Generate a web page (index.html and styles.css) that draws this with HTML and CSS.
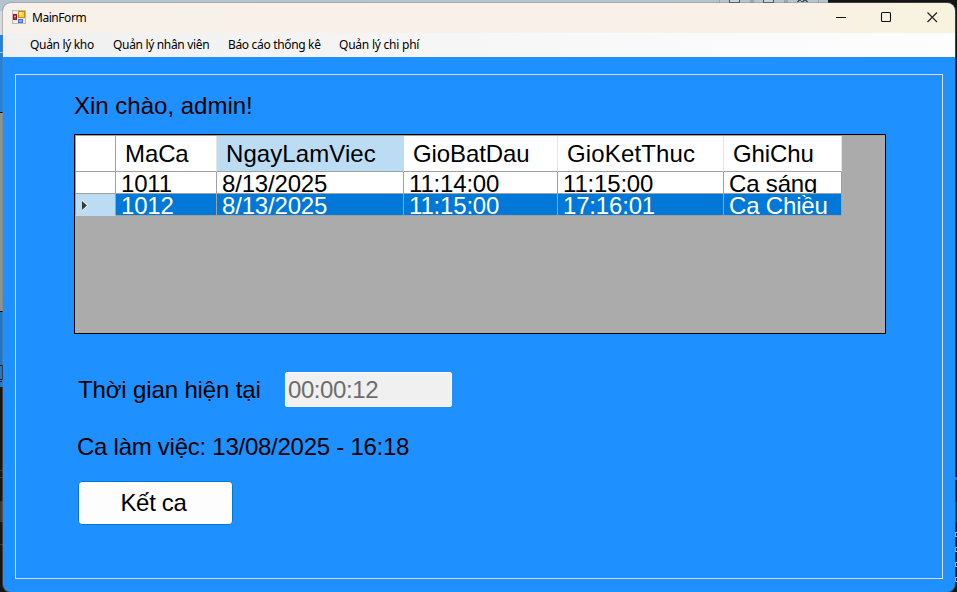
FILE: index.html
```html
<!DOCTYPE html>
<html lang="vi">
<head>
<meta charset="utf-8">
<title>MainForm</title>
<link rel="stylesheet" href="styles.css">
</head>
<body>
<svg class="backdrop" width="957" height="592" shape-rendering="crispEdges">
  <rect width="957" height="592" fill="#171513"/>
  <rect width="828" height="12" fill="#b7c3cd"/>
  <g fill="#9aa6b6"><rect x="719" width="1" height="3"/><rect x="750" width="4" height="3"/><rect x="784" width="4" height="3"/><rect x="818" width="1" height="3"/></g>
  <g fill="#cfd0d2" stroke="#484c56"><path d="M729.500-1v3h10v-3M763.500-1v3h10v-3"/></g>
  <path d="M797 2l3-2 2 2 3-2 3 2" fill="none" stroke="#484c56"/>
  <rect y="11" width="4" height="24" fill="#d8d9da"/>
  <rect y="35" width="4" height="78" fill="#1f82e0"/>
  <rect y="52" width="4" height="1" fill="#b9c6d0"/>
  <rect y="112" width="4" height="1" fill="#000"/>
  <rect y="113" width="4" height="198" fill="#929292"/>
  <rect y="311" width="4" height="1" fill="#000"/>
  <rect y="312" width="4" height="75" fill="#1e76c8"/>
  <path d="M0 365h2v14h-2M0 381h2" fill="none" stroke="#07101c"/>
  <g fill="#3b3836"><rect y="470" width="3" height="1"/><rect y="477" width="3" height="1"/><rect y="501" width="3" height="21"/><rect y="544" width="3" height="1"/></g>
  <rect x="955" y="477" width="2" height="3" fill="#5c50b0"/>
  <rect x="955" y="502" width="2" height="20" fill="#353231"/>
  <g fill="none" stroke="#c3b397"><path d="M957 532.500h-1.500v4h1.500M957 547.500h-1.500v4h1.500M957 562.500h-1.500v4h1.500M957 577.500h-1.500v4h1.500"/></g>
</svg>
<div class="window">
  <header class="titlebar">
    <svg class="app-icon" width="14" height="14" viewBox="0 0 14 14">
      <rect x=".5" y=".5" width="13" height="13" fill="#eceef0" stroke="#b9bbbd"/>
      <rect x="6.500" y="1.500" width="6" height="6" fill="#ffd03d" stroke="#c58b08"/>
      <rect x="7" y="2" width="3" height="3" fill="#ffe88c"/>
      <rect x="1.500" y="4.500" width="3" height="5" fill="#c83a36" stroke="#8f1716"/>
      <rect x="2.500" y="6" width="1" height="1" fill="#fff"/>
      <rect x="6.500" y="9.500" width="4" height="3" fill="#7fb0f8" stroke="#3b70cf"/>
    </svg>
    <span class="title">MainForm</span>
    <svg class="controls" width="104" height="12" viewBox="0 0 104 12">
      <path d="M1 6.500h10" stroke="#111"/>
      <rect x="46.500" y="1.500" width="9" height="9" rx="1" fill="none" stroke="#111" stroke-width="1.100"/>
      <path d="M92.500 1.500l9.500 9.500M102 1.500l-9.500 9.500" stroke="#222" stroke-width="1.150"/>
    </svg>
  </header>
  <nav class="menu">
    <span class="m1">Quản lý kho</span><span class="m2">Quản lý nhân viên</span><span class="m3">Báo cáo thống kê</span><span class="m4">Quản lý chi phí</span>
  </nav>
  <main class="panel">
    <div class="greeting"><span>Xin chào, admin!</span></div>
    <div class="gridview">
      <div class="row head"><div></div><div>MaCa</div><div class="active">NgayLamViec</div><div>GioBatDau</div><div class="wide">GioKetThuc</div><div>GhiChu</div></div>
      <div class="row"><div></div><div>1011</div><div>8/13/2025</div><div>11:14:00</div><div>11:15:00</div><div>Ca sáng</div></div>
      <div class="row selected"><div><svg width="7" height="11" viewBox="0 0 7 11"><path d="M0 0l6 5.500-6 5.500z" fill="#fff"/><path d="M0 1l5 4.500-5 4.500z" fill="#383838"/></svg></div><div>1012</div><div>8/13/2025</div><div>11:15:00</div><div>17:16:01</div><div>Ca Chiều</div></div>
    </div>
    <div class="time"><span class="time-label">Thời gian hiện tại</span><div class="time-box">00:00:12</div></div>
    <div class="shift"><span>Ca làm việc: 13/08/2025 - 16:18</span></div>
    <button class="end"><span>Kết ca</span></button>
  </main>
</div>
</body>
</html>
```
FILE: styles.css
```css
* { box-sizing: border-box; }
body {
  margin: 0;
  width: 957px;
  height: 592px;
  padding: 3px 2px 0 3px;
  overflow: hidden;
  font: 24px/28px "Liberation Sans", Arial, sans-serif;
  color: #000;
}
.backdrop { position: absolute; left: 0; top: 0; z-index: -1; }
.window {
  height: 589px;
  background: #1e90ff;
  border-radius: 8px;
  overflow: hidden;
  box-shadow: 0 0 0 1px #77818b66;
  white-space: nowrap;
}
.titlebar {
  height: 30px;
  display: flex;
  align-items: center;
  padding: 0 17px 2px 9px;
  background: linear-gradient(90deg, #f8f1ea, #f9f0e9 65%, #f9f1e7 82%, #f8f3de);
  font: 12px/16px "Noto Sans", "Open Sans", sans-serif;
}
.title { margin-left: 6px; padding-top: 2px; letter-spacing: -.45px; }
.controls { margin-left: auto; margin-right: -1px; }
.menu {
  height: 24px;
  display: flex;
  align-items: center;
  padding-left: 27px;
  background: linear-gradient(90deg, #f0f0f0, #f4f4f4 35%, #fbfbfb 80%, #fdfdfd);
  font: 12px/16px "Noto Sans", "Open Sans", sans-serif;
  letter-spacing: -.33px;
}
.m1 { width: 83px; }
.m2 { width: 115px; }
.m3 { width: 111px; }
.m4 { letter-spacing: -.23px; }
.panel {
  margin: 17px 12px 0;
  height: 505px;
  border: 1px solid #dcdcdc;
  padding-left: 58px;
}
.greeting { height: 59px; padding-top: 17px; }
.gridview {
  width: 812px;
  height: 200px;
  border: 1px solid #000;
  background: linear-gradient(#a0a0a0 1px, #ababab 1px);
  padding-top: 1px;
}
.row {
  display: grid;
  grid-template-columns: 41px 101px 187px 154px 166px 118px;
  width: 767px;
  height: 22px;
}
.row > div {
  background: #fff;
  border-right: 1px solid #a0a0a0;
  border-bottom: 1px solid #a0a0a0;
  padding-left: 5px;
  line-height: 23px;
  letter-spacing: -.18px;
  overflow: hidden;
}
.row > div:first-child { border-left: 1px solid #a0a0a0; }
.row.head { height: 36px; }
.row.head > div { padding-left: 9px; line-height: 35px; border-right-color: #e5e5e5; letter-spacing: -.1px; }
.row.head > div:first-child { border-right-color: #a0a0a0; }
.row.head > .active { background: #bcdcf4; border-right-color: #bcdcf4; letter-spacing: .08px; }
.row.head > .wide { letter-spacing: .15px; }
.row.selected > div { background: #0078d7; color: #fff; }
.row.selected > div:first-child { background: #bcdcf4; display: flex; align-items: center; padding: 2px 0 0 6px; border-bottom-color: #bcdcf4; }
.time { display: flex; align-items: center; margin: 37px 0 0 4px; height: 37px; }
.time-label { width: 207px; letter-spacing: -.14px; }
.time-box {
  width: 167px;
  height: 35px;
  border: 1px solid #fafafa;
  border-radius: 2px;
  background: #f0f0f0;
  color: #6d6d6d;
  padding: 3px 2px;
  letter-spacing: -.42px;
}
.shift { height: 73px; padding: 25px 0 0 3px; letter-spacing: -.26px; }
.end {
  display: block;
  width: 155px;
  height: 44px;
  margin-left: 4px;
  padding: 0 4px 0 0;
  border: 1px solid #0078d4;
  border-radius: 4px;
  background: #fdfdfd;
  font: inherit;
  letter-spacing: -.3px;
  color: #000;
}
```
